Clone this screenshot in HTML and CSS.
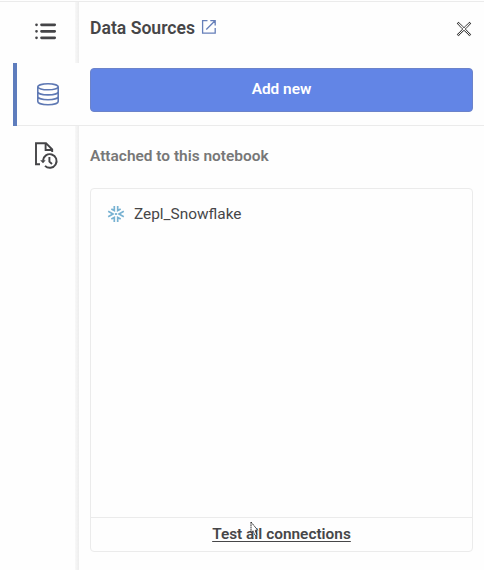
FILE: index.html
```html
<!DOCTYPE html>
<html lang="en">
<head>
<meta charset="utf-8">
<title>Data Sources</title>
<link rel="stylesheet" href="styles.css">
</head>
<body>
<div class="app">
  <nav class="sidebar">
    <div class="tab tab-list">
      <svg width="24" height="20" viewBox="0 0 24 20" fill="none" stroke="#444447" stroke-width="2.7" stroke-linecap="round"><path d="M8.5 3.8H21.7M8.5 10.3H21.7M8.5 16.8H21.7M3.5 3.8h.02M3.5 10.3h.02M3.5 16.8h.02"/></svg>
    </div>
    <div class="tab tab-active">
      <svg width="24" height="24" viewBox="0 0 24 24" fill="none" stroke="#5e78b3" stroke-width="1.6"><ellipse cx="12" cy="4.8" rx="10.2" ry="3"/><path d="M1.8 4.8V19.5C1.8 21.3 6.4 22.7 12 22.7S22.2 21.3 22.2 19.5V4.8M1.8 9.7C1.8 11.5 6.4 12.9 12 12.9S22.2 11.5 22.2 9.7M1.8 14.6C1.8 16.4 6.4 17.8 12 17.8S22.2 16.4 22.2 14.6"/></svg>
    </div>
    <div class="tab tab-history">
      <svg width="26" height="30" viewBox="0 0 26 30" fill="none" stroke="#444447" stroke-width="1.9"><path d="M7 24.2H3V3.2H13L19.2 9.5V12M12.6 3.2V10H19.2"/><path d="M10 20.6A6.8 6.8 0 1 1 12 25.8"/><path d="M16.4 17V21.6L19 24"/><path d="M7.2 20.3H12.7L10 23.3Z" fill="#444447" stroke="none"/></svg>
    </div>
  </nav>
  <main class="panel">
    <header class="head">
      <h1>Data Sources</h1>
      <svg class="external" width="16" height="16" viewBox="0 0 16 16" fill="none" stroke="#667fb9" stroke-width="1.3"><path d="M6.5 1.6H1.6V14.2H14.2V9M9.3 1.6H14.2V6.5M14 1.8L5.3 10.5"/></svg>
      <svg class="close" width="16" height="16" viewBox="0 0 16 16" fill="none"><path stroke="#333" stroke-width="2.6" stroke-dasharray="1.2 .35" d="M1.7 1.7L14.3 14.3M14.3 1.7L1.7 14.3"/><path stroke="#fff" stroke-width="1" d="M2.2 2.2L13.8 13.8M13.8 2.2L2.2 13.8"/></svg>
    </header>
    <div class="action"><button class="add">Add new</button></div>
    <h2>Attached to this notebook</h2>
    <section class="card">
      <div class="source">
        <svg width="18" height="18" viewBox="0 0 18 18" fill="none" stroke="#78b2d2" stroke-width="1.7"><path d="M7.3 1V5.6L4.3 3.9M10.7 1V5.6L13.7 3.9M7.3 17V12.4L4.3 14.1M10.7 17V12.4L13.7 14.1M1.2 6.3L6 9L1.2 11.7M16.8 6.3L12 9L16.8 11.7"/><path d="M9 8L10 9L9 10L8 9Z" stroke-width=".9"/></svg>
        <span>Zepl_Snowflake</span>
      </div>
      <footer class="test"><a>Test all connections</a>
        <svg class="cursor" width="10" height="18" viewBox="0 0 10 18" fill="none"><path d="M1 1V11L3 9.5H8Z" fill="#fff"/><path d="M1 1V11.5L3.2 9.8L5.2 14.5L7.1 13.7L5.3 9.3H7.8Z" stroke="#333" stroke-dasharray="1.8 .5"/><path d="M4.2 10L6 14.2" stroke="#fff"/></svg>
      </footer>
    </section>
  </main>
</div>
</body>
</html>
```
FILE: styles.css
```css
* { box-sizing: border-box; }
body { margin: 0; background: #fefefe; font-family: Roboto, sans-serif; color: #464648; }
svg { display: block; flex: none; }
.app { display: flex; width: 484px; height: 570px; border-top: 1px solid #fefefe; background: linear-gradient(#ebebeb, #ebebeb) top / 100% 1px no-repeat; }
.sidebar { width: 79px; margin-top: 1px; background: linear-gradient(90deg, #f8f8f8, #ededed) right / 4px 100% no-repeat; }
.tab { display: flex; }
.tab-list { height: 61px; padding: 19px 0 0 33px; }
.tab-active { height: 63px; margin-left: 13px; padding: 19px 0 0 19px; border-left: 4px solid #5e7dbd; background: linear-gradient(#ebebeb, #ebebeb) bottom / 100% 1px no-repeat #fefefe; }
.tab-history { padding: 14px 0 0 33px; }
.panel { width: 405px; display: flex; flex-direction: column; }
.head { display: flex; align-items: center; height: 67px; padding: 0 12px 14px 11px; }
h1 { width: 106px; margin: 0; font-size: 17.6px; line-height: 22px; font-weight: 600; white-space: nowrap; }
.external { margin-left: 5px; margin-top: -1px; }
.close { margin-left: auto; margin-top: 3px; }
.action { height: 58px; padding: 0 11px 0 11px; border-bottom: 1px solid #ebebeb; }
.add { display: block; width: 383px; height: 44px; border: 1px solid #6c83ca; border-radius: 4px; background: #6285e6; color: #fff; font: 600 15.4px/40px Roboto, sans-serif; padding: 0 0 2px; }
h2 { margin: 19px 0 0 11px; font-size: 15.45px; line-height: 22px; font-weight: 600; color: #777; }
.card { display: flex; flex-direction: column; width: 383px; height: 364px; margin: 21px 0 0 11px; border: 1px solid #ebebeb; border-radius: 4px; }
.source { display: flex; align-items: center; flex: 1; align-self: flex-start; max-height: 50px; padding-left: 16px; font-size: 15.4px; }
.source span { margin-left: 9px; }
.test { position: relative; display: flex; justify-content: center; height: 34px; margin-top: auto; border-top: 1px solid #ebebeb; font-size: 15.4px; line-height: 32px; font-weight: 600; }
.test a { text-decoration: underline; text-underline-offset: 2px; }
.cursor { position: absolute; left: 159px; top: 3px; }
```
